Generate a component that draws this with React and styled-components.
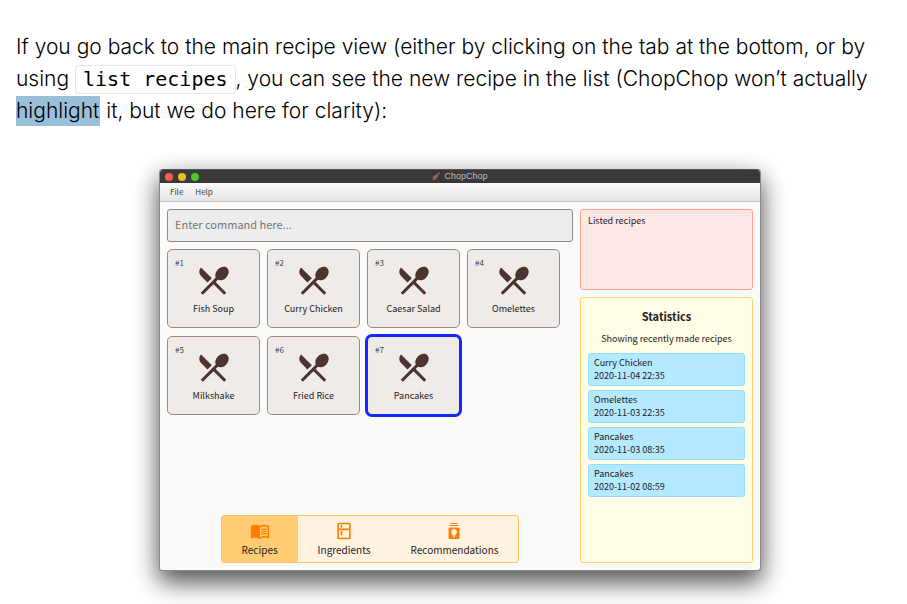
import React from "react";
import styled, { createGlobalStyle, css } from "styled-components";
import { MdMenuBook, MdOutlineKitchen } from "react-icons/md";

const ui = `"Noto Sans CJK SC", "Noto Sans", sans-serif`;

const GlobalStyle = createGlobalStyle`
  *, *::before, *::after { box-sizing: border-box; }
  body { margin: 0; background: #fff; }
  button, input { font: inherit; color: inherit; }
`;

const Page = styled.main`
  min-height: 100vh;
  padding: 31px 2px 0 16px;
  color: #000;
  font-family: Inter, sans-serif;
`;

const Intro = styled.p`
  margin: 0 24px 0 0;
  font-size: 21px;
  font-weight: 300;
  line-height: 32px;
`;

const Code = styled.code`
  display: inline-block;
  padding: 0 7px;
  border: 1px solid #e6e6e6;
  border-radius: 4px;
  font-family: "DejaVu Sans Mono", monospace;
  font-size: 20px;
  font-weight: 400;
  line-height: 27px;
`;

const Highlight = styled.mark`
  display: inline-block;
  padding-right: 1px;
  background: #9abfd8;
  color: inherit;
  line-height: 30px;
`;

const AppWindow = styled.section`
  display: flex;
  flex-direction: column;
  margin: 42px 144px 0 143px;
  min-height: 402px;
  border: 1px solid #8a8a8a;
  border-top-color: #555;
  border-radius: 4px 4px 3px 3px;
  background: #fafafa;
  box-shadow: 0 12px 24px rgba(0, 0, 0, 0.62), 0 2px 24px rgba(0, 0, 0, 0.15);
  color: #222;
  font-family: ${ui};
  overflow: hidden;
`;

const TitleBar = styled.header`
  display: grid;
  grid-template-columns: 1fr auto 1fr;
  align-items: center;
  height: 13px;
  padding: 0 5px;
  background: #393939;
`;

const Lights = styled.div`
  display: flex;
  gap: 5px;
`;

const Light = styled.span`
  width: 8px;
  height: 8px;
  border-radius: 50%;
  background: ${(p) => p.$color};
`;

const WindowTitle = styled.h1`
  display: flex;
  align-items: center;
  gap: 4px;
  margin: 0;
  color: #bdbdbd;
  font: 400 9px/13px "Liberation Sans", sans-serif;
`;

const MenuBar = styled.nav`
  display: flex;
  gap: 12px;
  height: 19px;
  padding: 0 10px;
  border-bottom: 1px solid #c4c4c4;
  background: linear-gradient(#fbfbfb, #e4e4e4);
`;

const MenuButton = styled.button`
  padding: 0;
  border: 0;
  background: none;
  color: #444;
  font-size: 8px;
  line-height: 18px;
`;

const Body = styled.div`
  display: grid;
  grid-template-columns: minmax(0, 1fr) 173px;
  gap: 7px;
  flex: 1;
  padding: 7px;
`;

const Main = styled.div`
  display: flex;
  flex-direction: column;
`;

const CommandInput = styled.input`
  width: 100%;
  height: 33px;
  padding: 0 7px 3px;
  border: 1px solid #8c8c8c;
  border-radius: 3px;
  background: #ededed;
  font-size: 11px;
  &::placeholder { color: #757575; opacity: 1; }
`;

const RecipeGrid = styled.ul`
  display: grid;
  grid-template-columns: repeat(4, 93px);
  gap: 8px 7px;
  margin: 7px 0 0;
  padding: 0;
  list-style: none;
`;

const RecipeCard = styled.li`
  display: grid;
  grid-template-columns: 1fr 37px 1fr;
  align-content: start;
  height: 79px;
  padding: 6px 7px;
  border: 1px solid #a1887f;
  border-radius: 5px;
  background: #efebe9;
  ${(p) =>
    p.$active &&
    css`
      border-color: #1726ff;
      box-shadow: 0 0 0 2px #1726ff;
    `}
`;

const RecipeNumber = styled.span`
  color: #444;
  font-size: 8px;
  line-height: 14px;
`;

const RecipeIcon = styled.svg`
  width: 37px;
  height: 37px;
  margin-top: 6px;
  fill: #4e342e;
`;

const RecipeName = styled.span`
  grid-column: 1 / -1;
  font-size: 9px;
  line-height: 20px;
  text-align: center;
`;

const Tabs = styled.nav`
  display: flex;
  align-self: center;
  margin-top: auto;
  border: 1px solid #ffc266;
  border-radius: 3px;
  background: #fff3e0;
`;

const Tab = styled.button`
  display: flex;
  flex-direction: column;
  align-items: center;
  height: 46px;
  padding: 5px 20px 0;
  border: 0;
  border-radius: 2px;
  background: ${(p) => (p.$active ? "#ffcc74" : "transparent")};
  font-size: 10px;
  line-height: 17px;
  svg { width: 20px; height: 20px; color: #ff8000; }
`;

const Side = styled.aside`
  display: flex;
  flex-direction: column;
  gap: 7px;
`;

const ResultBox = styled.output`
  height: 81px;
  padding: 3px 7px;
  border: 1px solid #ffa191;
  border-radius: 3px;
  background: #ffe7e6;
  font-size: 9px;
  line-height: 15px;
`;

const Statistics = styled.section`
  flex: 1;
  padding: 7px;
  border: 1px solid #ffd46e;
  border-radius: 3px;
  background: #fffde5;
`;

const StatsTitle = styled.h2`
  margin: 0;
  font-size: 11px;
  font-weight: 700;
  line-height: 23px;
  text-align: center;
`;

const StatsNote = styled.p`
  margin: 0 0 3px;
  font-size: 9px;
  line-height: 22px;
  text-align: center;
`;

const StatsList = styled.ul`
  display: grid;
  gap: 4px;
  margin: 0;
  padding: 0;
  list-style: none;
`;

const StatsItem = styled.li`
  display: grid;
  align-content: start;
  height: 33px;
  padding: 2px 5px;
  border: 1px solid #8fe0fa;
  border-radius: 3px;
  background: #b5e9ff;
  font-size: 9px;
  line-height: 13px;
`;

function CrossedCutlery() {
  return (
    <RecipeIcon viewBox="0 0 24 24" aria-hidden="true">
      <path d="M8.1 13.34l2.83-2.83L3.91 3.5a4.008 4.008 0 0 0 0 5.66l4.19 4.18zm6.78-1.81c1.53.71 3.68.21 5.27-1.38 1.91-1.91 2.28-4.65.81-6.12-1.46-1.46-4.2-1.1-6.12.81-1.59 1.59-2.09 3.74-1.38 5.27L3.7 19.87l1.41 1.41L12 14.41l6.88 6.88 1.41-1.41L13.41 13l1.47-1.47z" />
    </RecipeIcon>
  );
}

function CleaverLogo() {
  return (
    <svg width="8" height="9" viewBox="0 0 8 9" aria-hidden="true">
      <path d="M1 4.5 4.5 2 6 4.5 3 8 .5 7.5Z" fill="#8d625a" />
      <path d="M5 3.5 7.5.5" stroke="#a06b5e" strokeWidth="1.2" />
    </svg>
  );
}

function IdeaStack() {
  return (
    <svg viewBox="0 0 20 20" aria-hidden="true">
      <path d="M6.5 2.5h7M5.5 4.5h9" stroke="currentColor" strokeWidth="1" fill="none" />
      <rect x="4.5" y="6.5" width="11" height="11.5" rx="1.5" fill="currentColor" />
      <path d="M10 8a3 3 0 0 1 1.7 5.4v1.1H8.3v-1.1A3 3 0 0 1 10 8zM8.9 15.2h2.2v1H8.9z" fill="#fff3e0" />
    </svg>
  );
}

const recipes = ["Fish Soup", "Curry Chicken", "Caesar Salad", "Omelettes", "Milkshake", "Fried Rice", "Pancakes"];

const history = [
  ["Curry Chicken", "2020-11-04 22:35"],
  ["Omelettes", "2020-11-03 22:35"],
  ["Pancakes", "2020-11-03 08:35"],
  ["Pancakes", "2020-11-02 08:59"],
];

export default function App() {
  return (
    <Page>
      <GlobalStyle />
      <Intro>
        If you go back to the main recipe view (either by clicking on the tab at the bottom, or by using{" "}
        <Code>list recipes</Code>, you can see the new recipe in the list (ChopChop won’t actually{" "}
        <Highlight>highlight</Highlight> it, but we do here for clarity):
      </Intro>
      <AppWindow>
        <TitleBar>
          <Lights>
            <Light $color="#ff5a50" />
            <Light $color="#e6bf2b" />
            <Light $color="#53c22b" />
          </Lights>
          <WindowTitle>
            <CleaverLogo />
            ChopChop
          </WindowTitle>
        </TitleBar>
        <MenuBar>
          <MenuButton>File</MenuButton>
          <MenuButton>Help</MenuButton>
        </MenuBar>
        <Body>
          <Main>
            <CommandInput type="text" aria-label="Command" placeholder="Enter command here..." />
            <RecipeGrid>
              {recipes.map((name, i) => (
                <RecipeCard key={name} $active={name === "Pancakes"}>
                  <RecipeNumber>#{i + 1}</RecipeNumber>
                  <CrossedCutlery />
                  <RecipeName>{name}</RecipeName>
                </RecipeCard>
              ))}
            </RecipeGrid>
            <Tabs>
              <Tab $active>
                <MdMenuBook />
                Recipes
              </Tab>
              <Tab>
                <MdOutlineKitchen />
                Ingredients
              </Tab>
              <Tab>
                <IdeaStack />
                Recommendations
              </Tab>
            </Tabs>
          </Main>
          <Side>
            <ResultBox>Listed recipes</ResultBox>
            <Statistics>
              <StatsTitle>Statistics</StatsTitle>
              <StatsNote>Showing recently made recipes</StatsNote>
              <StatsList>
                {history.map(([name, time]) => (
                  <StatsItem key={time}>
                    <span>{name}</span>
                    <time>{time}</time>
                  </StatsItem>
                ))}
              </StatsList>
            </Statistics>
          </Side>
        </Body>
      </AppWindow>
    </Page>
  );
}
